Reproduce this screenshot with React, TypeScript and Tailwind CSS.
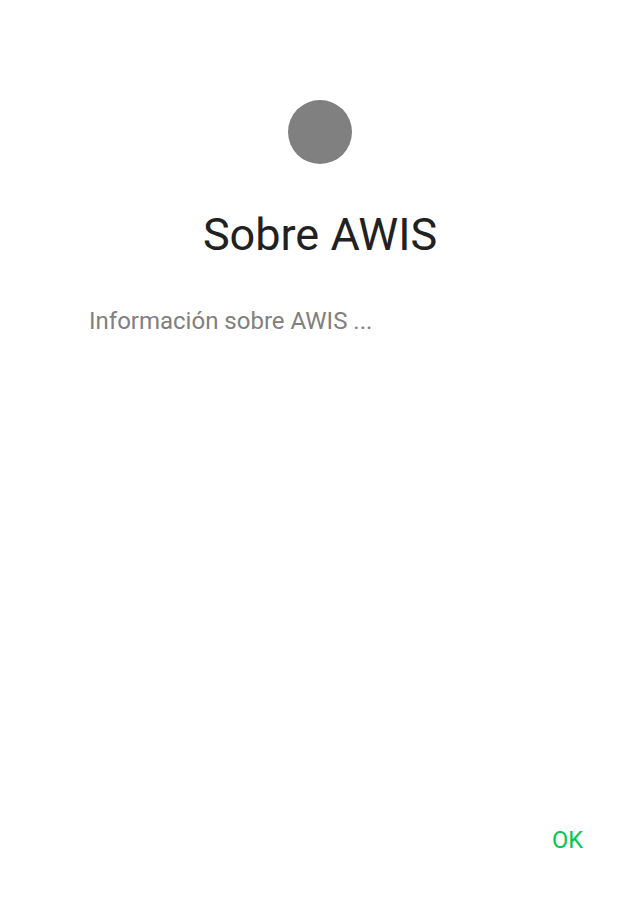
export default function App() {
  return (
    <div className="flex h-[900px] w-[640px] flex-col bg-white font-['Roboto',sans-serif]">
      <div className="flex flex-col items-center pt-[100px]">
        <div className="h-16 w-16 rounded-full bg-[#808080]" />
        <h1 className="mt-[41px] text-[45px] leading-[60px] text-[#212121]">Sobre AWIS</h1>
      </div>
      <p className="mt-[42px] px-[89px] text-[24px] leading-[28px] text-[#808080]">
        Información sobre AWIS ...
      </p>
      <div className="mt-auto flex justify-end px-[57px] pb-[46px]">
        <button className="text-[23.5px] leading-[28px] text-[#00c853]">OK</button>
      </div>
    </div>
  )
}
